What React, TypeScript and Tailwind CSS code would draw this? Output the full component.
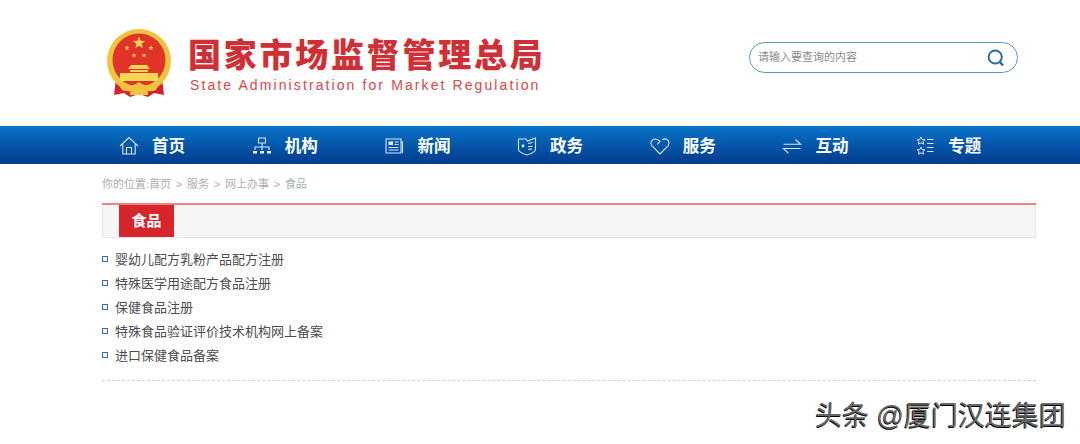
import { ReactNode } from 'react';

const FONT = "font-['Liberation_Sans','Noto_Sans_CJK_SC',sans-serif]";

function Emblem() {
  const star = (cx: number, cy: number, r: number) => {
    const pts = [];
    for (let i = 0; i < 10; i++) {
      const rad = i % 2 === 0 ? r : r * 0.42;
      const a = (Math.PI / 5) * i - Math.PI / 2;
      pts.push(`${(cx + rad * Math.cos(a)).toFixed(2)},${(cy + rad * Math.sin(a)).toFixed(2)}`);
    }
    return pts.join(' ');
  };

  return (
    <svg width="66" height="69" viewBox="0 0 66 69" className="shrink-0">
      <path d="M10 50 L8 66 L18 64 L24 68 L33 65 L42 68 L48 64 L58 66 L56 50 Z" fill="#d3222a" />
      <circle cx="33" cy="32" r="32" fill="#f1c440" />
      <circle cx="33" cy="31" r="26.5" fill="#e2332b" />
      <polygon points={star(33, 14, 6.5)} fill="#f8d552" />
      <polygon points={star(21, 19, 2.8)} fill="#f8d552" />
      <polygon points={star(45, 19, 2.8)} fill="#f8d552" />
      <polygon points={star(28, 26.5, 2.6)} fill="#f8d552" />
      <polygon points={star(38, 26.5, 2.6)} fill="#f8d552" />
      <path d="M25 36 H41 L44 40 H22 Z M24 41 H42 V43 H24 Z M14 44 H52 V52 H14 Z" fill="#f8d552" />
      <path d="M12 54 C20 60 27 57 33 53 C39 57 46 60 54 54 L50 61 C44 64 38 61 33 59 C28 61 22 64 16 61 Z" fill="#f1c440" />
      <path d="M24 63 H42 V66 H24 Z" fill="#f1c440" />
    </svg>
  );
}

const strokeProps = {
  fill: 'none',
  stroke: '#d7e6f6',
  strokeWidth: 1.1,
};

function HomeIcon() {
  return (
    <svg width="20" height="20" viewBox="0 0 20 20" {...strokeProps}>
      <path d="M1 10 L10 1.5 L19 10 M3.8 8 V18 H16.2 V8 M7.5 18 V11.5 H12.5 V18" />
    </svg>
  );
}

function OrgIcon() {
  return (
    <svg width="20" height="20" viewBox="0 0 20 20" {...strokeProps}>
      <path d="M6.5 2 H13.5 V7 H6.5 Z M10 7 V11 M3 14 V11 H17 V14 M10 11 V14" />
      <path d="M1 15 H5 V17.5 H1 Z M8 15 H12 V17.5 H8 Z M15 15 H19 V17.5 H15 Z" fill="#e8f1fb" stroke="none" />
    </svg>
  );
}

function NewsIcon() {
  return (
    <svg width="20" height="20" viewBox="0 0 20 20" {...strokeProps}>
      <path d="M2 3 H17 V17 H2 Z M17 6 H18.5 V17" />
      <path d="M4.5 5.5 H9 V9 H4.5 Z" fill="#e8f1fb" stroke="none" />
      <path d="M10.5 6 H14.5 M10.5 8.5 H14.5 M4.5 11.5 H14.5 M4.5 14 H14.5" />
    </svg>
  );
}

function GovIcon() {
  return (
    <svg width="20" height="20" viewBox="0 0 20 20" {...strokeProps}>
      <path d="M1.5 3 H9 L10.5 5 L18.5 2 V13.5 C18.5 16 13 18 10 19 C7 18 1.5 16 1.5 13.5 Z" />
      <circle cx="6" cy="10" r="1.4" fill="#e8f1fb" stroke="none" />
      <path d="M11 7.5 L15.5 6.5 M11 10.5 H15.5 M11 13.5 L15 13" />
    </svg>
  );
}

function HeartIcon() {
  return (
    <svg width="20" height="20" viewBox="0 0 20 20" {...strokeProps}>
      <path d="M10 18 L2 9.8 C0.3 7.8 0.8 4.6 3.2 3.4 C5.6 2.3 7.8 3.2 10 5.4 L7.4 8.4 M12.4 3.8 C14 2.7 15.6 2.7 16.9 3.4 C19.2 4.6 19.7 7.8 18 9.8 L10 18" />
    </svg>
  );
}

function SwapIcon() {
  return (
    <svg width="20" height="20" viewBox="0 0 20 20" {...strokeProps}>
      <path d="M1.5 8.3 H18.5 L13.5 3.5 M18.5 12.5 H1.5 L6.5 17.3" />
    </svg>
  );
}

function TopicIcon() {
  return (
    <svg width="20" height="20" viewBox="0 0 20 20" {...strokeProps} strokeWidth={1}>
      <path d="M6 1 L7.2 3.6 H10 L7.9 5.5 L8.6 8.2 L6 6.8 L3.4 8.2 L4.1 5.5 L2 3.6 H4.8 Z" />
      <path d="M6 11 L7.2 13.6 H10 L7.9 15.5 L8.6 18.2 L6 16.8 L3.4 18.2 L4.1 15.5 L2 13.6 H4.8 Z" />
      <path d="M12 3.5 H18.5 M12 7.5 H18.5 M12 11.5 H18.5 M12 15.5 H18.5" />
    </svg>
  );
}

const navItems: { label: string; icon: ReactNode }[] = [
  { label: '首页', icon: <HomeIcon /> },
  { label: '机构', icon: <OrgIcon /> },
  { label: '新闻', icon: <NewsIcon /> },
  { label: '政务', icon: <GovIcon /> },
  { label: '服务', icon: <HeartIcon /> },
  { label: '互动', icon: <SwapIcon /> },
  { label: '专题', icon: <TopicIcon /> },
];

const links = [
  '婴幼儿配方乳粉产品配方注册',
  '特殊医学用途配方食品注册',
  '保健食品注册',
  '特殊食品验证评价技术机构网上备案',
  '进口保健食品备案',
];

const crumbs = ['服务', '网上办事', '食品'];

export default function App() {
  return (
    <div className={`relative h-[444px] w-[1080px] overflow-hidden bg-white ${FONT}`}>
      <header className="flex h-[126px] items-start pl-[106px]">
        <div className="mt-[29px]">
          <Emblem />
        </div>
        <div className="ml-[16px] mt-[36px] w-[360px]">
          <h1 className="text-[33px] leading-[39px] font-black tracking-[2.75px] whitespace-nowrap text-[#d03035]">
            国家市场监督管理总局
          </h1>
          <p className="ml-[2px] mt-[1px] text-[14px] leading-[18px] tracking-[2.1px] whitespace-nowrap text-[#d8474a]">
            State Administration for Market Regulation
          </p>
        </div>
        <div className="ml-[201px] mt-[42px] flex h-[31px] w-[269px] items-center justify-between rounded-full border border-[#5b97c4] pl-[8px] pr-[11px]">
          <span className="text-[11px] text-[#8a8a8a]">请输入要查询的内容</span>
          <svg width="20" height="20" viewBox="0 0 20 20" fill="none">
            <circle cx="9.2" cy="9" r="6.6" stroke="#2a6ea3" strokeWidth="2" />
            <path d="M13.8 14 L17 17.5" stroke="#2f5f86" strokeWidth="2.2" />
          </svg>
        </div>
      </header>

      <nav className="flex h-[38px] bg-gradient-to-b from-[#0b73c8] to-[#033b8c] pl-[119px] pt-[2px]">
        {navItems.map((item) => (
          <a key={item.label} className="flex w-[132.7px] shrink-0 items-center">
            {item.icon}
            <span className="ml-[13px] text-[16.5px] font-bold text-white">{item.label}</span>
          </a>
        ))}
      </nav>

      <main className="ml-[102px] w-[934px]">
        <div className="flex h-[39px] items-center pt-[1px] text-[11px] text-[#a9adb3]">
          <span>你的位置:首页</span>
          {crumbs.map((crumb) => (
            <span key={crumb} className="flex items-center">
              <span className="mx-[4.75px]">&gt;</span>
              {crumb}
            </span>
          ))}
        </div>

        <div className="h-[2px] bg-[#ee8385]" />
        <div className="h-[33px] border-x border-b border-[#e6e6e6] bg-[#f6f6f6] pl-[16px]">
          <div className="flex h-[32px] w-[55px] items-center justify-center bg-[#d7262b] text-[15px] font-bold text-white">
            食品
          </div>
        </div>

        <ul className="mt-[10px] border-b border-dashed border-[#cfcfcf] pb-[12px]">
          {links.map((link) => (
            <li key={link} className="flex h-[24px] items-center text-[13px] text-[#4d4d4d]">
              <span className="mb-[2px] mr-[7px] h-[6px] w-[6px] border border-[#3a6ca8]" />
              {link}
            </li>
          ))}
        </ul>
      </main>

      <div className="absolute left-[815px] top-[399px] text-[27px] leading-[34px] whitespace-nowrap text-[#666] [text-shadow:-0.6px_0.6px_0_#000,0.6px_-0.6px_0_#fff]">
        头条 @厦门汉连集团
      </div>
    </div>
  );
}
